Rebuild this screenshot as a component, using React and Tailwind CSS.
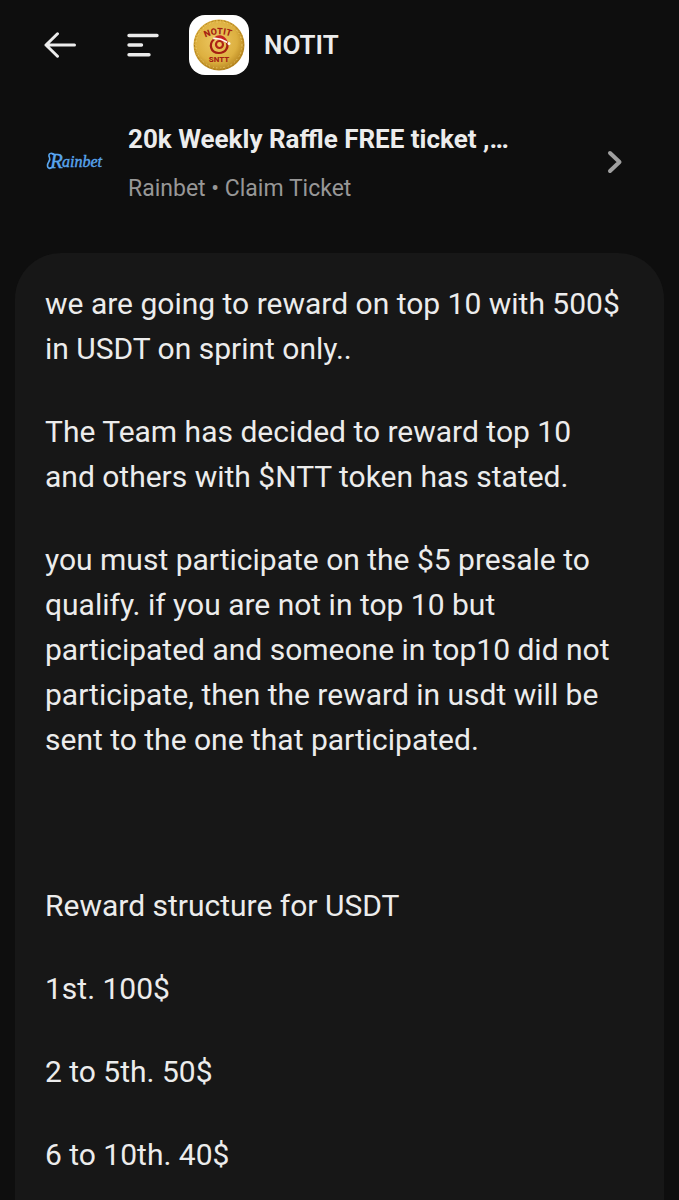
const paragraphs = [
  "we are going to reward on top 10 with 500$ in USDT on sprint only..",
  "The Team has decided to reward top 10 and others with $NTT token has stated.",
  "you must participate on the $5 presale to qualify. if you are not in top 10 but participated and someone in top10 did not participate, then the reward in usdt will be sent to the one that participated.",
  "",
  "Reward structure for USDT",
  "1st. 100$",
  "2 to 5th. 50$",
  "6 to 10th. 40$",
];

function BackIcon() {
  return (
    <svg width="32" height="26" viewBox="0 0 32 26" fill="none" stroke="#ececec" strokeWidth="3" strokeLinecap="round" strokeLinejoin="round" aria-hidden="true">
      <path d="M30.5 13H2M13.5 1.8 2 13l11.500 11.200" />
    </svg>
  );
}

function MenuIcon() {
  return (
    <svg width="32" height="26" viewBox="0 0 32 26" fill="none" stroke="#ececec" strokeWidth="3.400" strokeLinecap="round" aria-hidden="true">
      <path d="M2 3.500h28M2 13h12.500M2 22.700h20" />
    </svg>
  );
}

function CoinLogo() {
  return (
    <svg width="60" height="60" viewBox="0 0 60 60" role="img" aria-label="NOTIT coin" className="shrink-0 rounded-2xl bg-white">
      <defs>
        <radialGradient id="gold" cx="45%" cy="42%" r="58%">
          <stop offset="0" stopColor="#edc862" />
          <stop offset="0.700" stopColor="#ddb040" />
          <stop offset="1" stopColor="#b98822" />
        </radialGradient>
        <path id="arc" d="M12 25Q30 13.500 48 25" />
      </defs>
      <circle cx="30" cy="30" r="25.500" fill="url(#gold)" />
      <circle cx="30" cy="30" r="24.500" fill="none" stroke="#a87918" strokeWidth="0.900" strokeDasharray="1 2 2 1.500" />
      <circle cx="30" cy="30" r="23" fill="none" stroke="#f3d982" strokeWidth="0.700" strokeDasharray="1.500 2 1 3" />
      <text fill="#a52212" fontFamily="Roboto, sans-serif" fontWeight="800" fontSize="9">
        <textPath href="#arc" startOffset="47%" textAnchor="middle">NOTIT</textPath>
      </text>
      <path d="M24.800 24.500c-5 4.500-3.500 13.200 4.900 13.500 7 .2 10-5.500 8.200-10.500" fill="none" stroke="#a51f12" strokeWidth="2.200" strokeLinecap="round" />
      <circle cx="30.500" cy="29.500" r="3.500" fill="#f0c75b" stroke="#ae2416" strokeWidth="2.200" />
      <path d="M25 23c2-4 10-4.500 13.500 3l-1 2z" fill="#c42622" />
      <path d="M25 23.500c4.500-.3 8.500 1 12.500 3.500" fill="none" stroke="#fff8ed" strokeWidth="1.800" strokeLinecap="round" />
      <circle cx="40" cy="28.500" r="1.500" fill="#fff8ed" />
      <text x="30" y="46.500" textAnchor="middle" fill="#a52212" fontFamily="Roboto, sans-serif" fontWeight="800" fontSize="8">SNTT</text>
    </svg>
  );
}

function RainbetLogo() {
  return (
    <svg width="60" height="30" viewBox="0 0 60 30" role="img" aria-label="Rainbet" className="shrink-0">
      <g fill="#59a6ef" stroke="#59a6ef" strokeWidth="0.400" fontFamily="'Liberation Serif', serif" fontStyle="italic">
        <text x="6" y="21" fontSize="21">R</text>
        <text x="18" y="20" fontSize="16">ainbet</text>
      </g>
      <path d="M11 8C7 4.500 3.500 7 5.500 10.500c1.500 3-2 4.500-2 8 0 3.500 4 4 5.500.5" fill="none" stroke="#59a6ef" strokeWidth="1.600" strokeLinecap="round" />
    </svg>
  );
}

export default function App() {
  return (
    <div className="flex min-h-screen flex-col bg-[#0e0e0e] font-[Roboto,sans-serif] text-[#ececec]">
      <header className="flex h-[90px] items-center px-11">
        <button type="button" aria-label="Back" className="mr-[51px]">
          <BackIcon />
        </button>
        <button type="button" aria-label="Menu" className="mr-[30px]">
          <MenuIcon />
        </button>
        <CoinLogo />
        <h1 className="ml-[15px] text-[26px] leading-8 font-semibold">NOTIT</h1>
      </header>

      <a href="#claim" className="flex h-[163px] items-center gap-6 pr-14 pb-5 pl-11">
        <RainbetLogo />
        <div className="min-w-0 flex-1 pt-1">
          <p className="truncate text-[26px] leading-8 font-bold">20k Weekly Raffle FREE ticket ,…</p>
          <p className="mt-[18px] truncate text-[23px] leading-8 text-[#979797]">Rainbet • Claim Ticket</p>
        </div>
        <svg width="16" height="24" viewBox="0 0 16 24" fill="none" stroke="#a0a0a0" strokeWidth="4" strokeLinecap="round" strokeLinejoin="round" className="shrink-0" aria-hidden="true">
          <path d="M3 3l9.500 9L3 21" />
        </svg>
      </a>

      <main className="mx-[15px] flex flex-1 flex-col gap-[38px] rounded-t-[46px] bg-[#171717] pr-[38px] pl-[30px] pt-7 text-[30px] leading-[45px]">
        {paragraphs.map((text, i) => (
          <p key={i} className="min-h-[45px]">{text}</p>
        ))}
      </main>
    </div>
  );
}
